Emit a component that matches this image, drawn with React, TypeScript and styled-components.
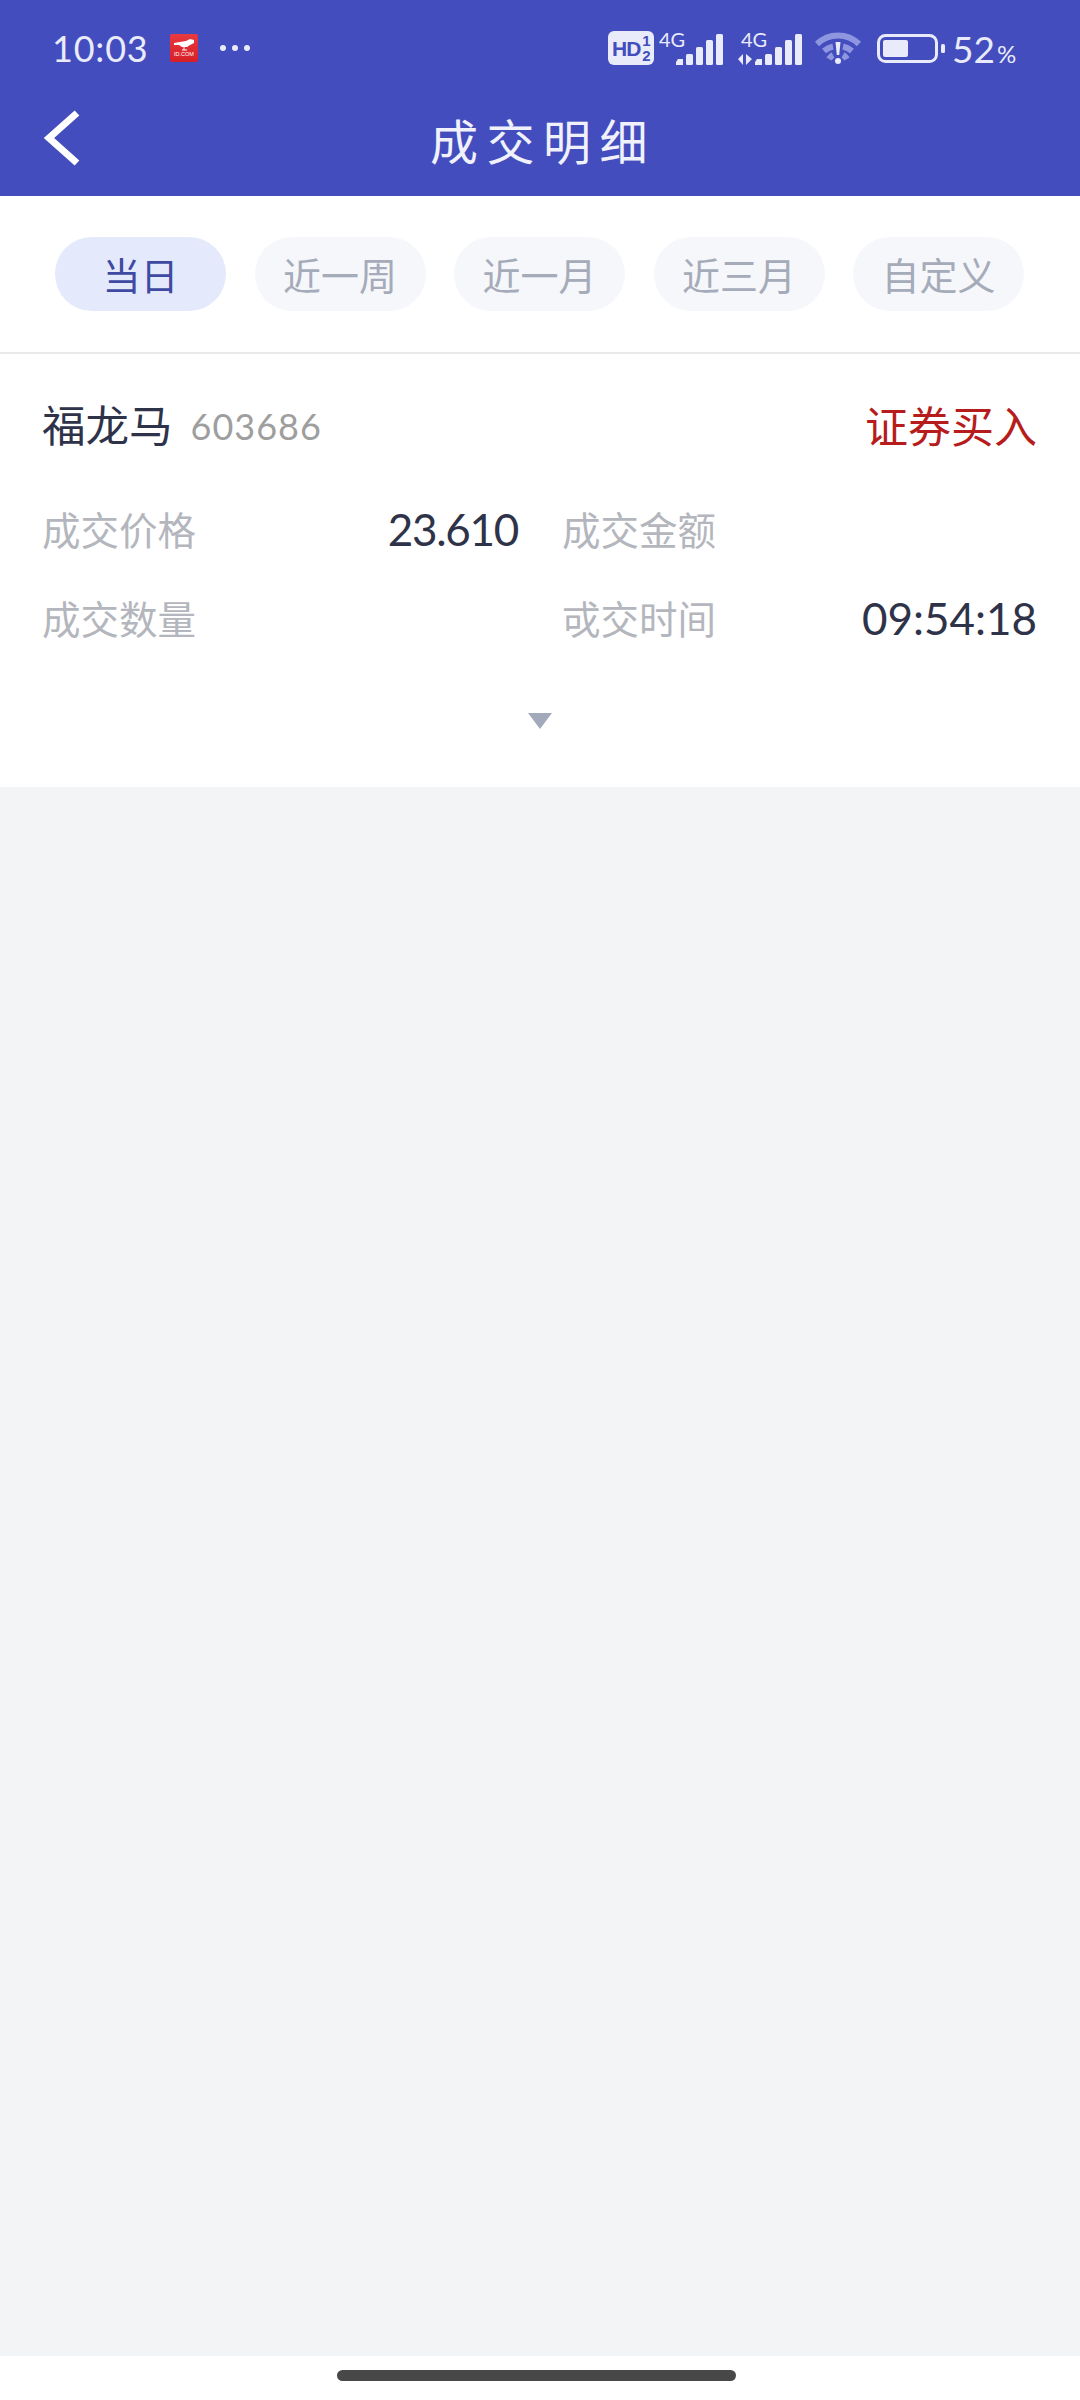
import React from "react";
import styled, { createGlobalStyle } from "styled-components";

const Global = createGlobalStyle`
  html, body { margin: 0; padding: 0; background: #f3f4f6; }
  * { box-sizing: border-box; }
`;

const CJK = `"Noto Sans CJK SC", "Noto Sans", sans-serif`;
const NUM = `Lato, "Noto Sans", sans-serif`;

const Page = styled.div`
  width: 1080px;
  height: 2400px;
  display: flex;
  flex-direction: column;
  background: #f3f4f6;
  font-family: ${CJK};
`;
const Header = styled.header`
  height: 196px;
  background: #434dbd;
  display: flex;
  flex-direction: column;
`;
const StatusBar = styled.div`
  height: 96px;
  padding: 0 22px 0 52px;
  display: flex;
  align-items: center;
  color: #e9ebfb;
`;
const Time = styled.span`
  font: 400 36px/1 ${NUM};
  letter-spacing: 0.8px;
  width: 118px;
`;
const Dots = styled.div`
  display: flex;
  gap: 6px;
  margin-left: 22px;
`;
const Dot = styled.i`
  width: 6px;
  height: 6px;
  border-radius: 50%;
  background: #e9ebfb;
`;
const StatusRight = styled.div`
  margin-left: auto;
  display: flex;
  align-items: center;
  width: 450px;
`;
const HdBadge = styled.div`
  width: 46px;
  height: 34px;
  border-radius: 6px;
  background: #e9ebfb;
  color: #434dbd;
  display: flex;
  align-items: center;
  padding-left: 4px;
  font: 700 21px/1 "Liberation Sans", sans-serif;
  letter-spacing: -1px;
`;
const Frac = styled.span`
  display: flex;
  flex-direction: column;
  font: 700 15px/15px "Liberation Sans", sans-serif;
  margin-left: 2px;
`;
const Net = styled.div<{ $gap: number }>`
  position: relative;
  height: 33px;
  width: 64px;
  margin-left: ${(p) => p.$gap}px;
`;
const NetLabel = styled.span<{ $inset?: number }>`
  position: absolute;
  left: ${(p) => p.$inset ?? 0}px;
  top: -3px;
  font: 400 20px/1 ${NUM};
  color: #e9ebfb;
`;
const Percent = styled.span`
  font: 400 37px/1 ${NUM};
  margin-left: 6px;
  color: #e9ebfb;
`;
const PercentSign = styled.span`
  font-size: 24px;
  margin-left: 2px;
`;
const Nav = styled.nav`
  position: relative;
  flex: 1;
  display: flex;
  align-items: center;
  justify-content: center;
  padding: 0 0 15px 6px;
`;
const BackIcon = styled.svg`
  position: absolute;
  left: 42px;
  top: 13px;
`;
const Title = styled.h1`
  margin: 0;
  font: 400 48px/1 ${CJK};
  letter-spacing: 8.5px;
  color: #f0f1fb;
`;
const Tabs = styled.div`
  height: 158px;
  padding: 41px 0 0 55px;
  display: flex;
  gap: 28.5px;
  background: #fff;
  border-bottom: 2px solid #e8e9eb;
  align-items: flex-start;
`;
const Tab = styled.div<{ $active?: boolean }>`
  width: 171px;
  height: 74px;
  border-radius: 37px;
  display: flex;
  align-items: center;
  justify-content: center;
  font: 400 38px/1 ${CJK};
  background: ${(p) => (p.$active ? "#e4e9fb" : "#f6f7fb")};
  color: ${(p) => (p.$active ? "#3f4aa3" : "#a5abb9")};
`;
const Card = styled.section`
  height: 433px;
  background: #fff;
  padding: 38px 43px 0 42px;
  display: flex;
  flex-direction: column;
`;
const TitleRow = styled.div`
  display: flex;
  align-items: center;
  height: 64px;
`;
const Name = styled.span`
  font: 400 43.5px/1 ${CJK};
  color: #2f3349;
`;
const Code = styled.span`
  font: 400 36px/1 ${NUM};
  color: #9e9e9e;
  margin-left: 18px;
  letter-spacing: 1px;
  position: relative;
  top: 2px;
`;
const Side = styled.span`
  margin-left: auto;
  font: 400 43px/1 ${CJK};
  color: #b71c1c;
`;
const Grid = styled.div`
  display: grid;
  grid-template-columns: 476px 475px;
  column-gap: 44px;
  margin-top: 28px;
`;
const Cell = styled.div`
  display: flex;
  align-items: center;
  justify-content: space-between;
  height: 89px;
`;
const Label = styled.span`
  font: 400 38.5px/1 ${CJK};
  color: #b4b6bd;
`;
const Value = styled.span<{ $tight?: boolean }>`
  font: 400 44px/1 ${NUM};
  letter-spacing: ${(p) => (p.$tight ? "-1.3px" : "0")};
  color: #2f3349;
`;
const Expand = styled.div`
  display: flex;
  justify-content: center;
  margin-top: 51px;
`;
const Main = styled.main`
  flex: 1;
`;
const HomeArea = styled.div`
  height: 44px;
  background: #fff;
  display: flex;
  justify-content: center;
  padding: 14px 7px 0 0;
`;
const HomeBar = styled.div`
  width: 399px;
  height: 11px;
  border-radius: 6px;
  background: #484848;
`;

const Logo = () => (
  <svg width="28" height="28" viewBox="0 0 28 28">
    <defs>
      <linearGradient id="lg" x1="0" y1="0" x2="0" y2="1">
        <stop offset="0" stopColor="#e83a3f" />
        <stop offset="1" stopColor="#d51f26" />
      </linearGradient>
    </defs>
    <rect width="28" height="28" rx="2" fill="url(#lg)" />
    <path d="M4 9l6-1 6-1 4-2 4 1v3l-4 2-3 2h-5l-3-2H4z" fill="#fff" />
    <path d="M14 13v3M12 16h5" stroke="#fff" strokeWidth="1" />
    <text x="14" y="22" fontSize="5.500" fill="#fff" textAnchor="middle" fontFamily="Liberation Sans">ID.COM</text>
  </svg>
);

const Bars = () => (
  <g fill="#e9ebfb" transform="translate(17 0)">
    <path d="M0 33v-3l2-3h5v6z" />
    <rect x="10" y="22" width="7" height="11" rx="1.500" />
    <rect x="20" y="15" width="7" height="18" rx="1.500" />
    <rect x="30" y="8" width="7" height="25" rx="1.500" />
    <rect x="40" y="2" width="7" height="31" rx="1.500" />
  </g>
);

const Wifi = () => (
  <svg width="48" height="34" viewBox="0 0 48 34" style={{ marginLeft: 12 }}>
    <g fill="none" stroke="#8f96e0" strokeWidth="6">
      <path d="M3 13 A30 30 0 0 1 45 13" />
      <path d="M10 20 A20 20 0 0 1 19 15.500" />
      <path d="M38 20 A20 20 0 0 0 29 15.500" />
      <path d="M15 28 A10 10 0 0 1 19 24" />
      <path d="M33 28 A10 10 0 0 0 29 24" />
    </g>
    <path d="M21.500 11h5l-1.300 13h-2.400z" fill="#e9ebfb" />
    <circle cx="24" cy="30" r="3" fill="#e9ebfb" />
  </svg>
);

const Battery = () => (
  <svg width="69" height="29" viewBox="0 0 69 29" style={{ marginLeft: 15 }}>
    <rect x="1.500" y="1.500" width="58" height="26" rx="7" fill="none" stroke="#e9ebfb" strokeWidth="3" />
    <rect x="6" y="6" width="25" height="17" rx="2" fill="#e9ebfb" />
    <rect x="64" y="10" width="4" height="9" rx="1.500" fill="#e9ebfb" />
  </svg>
);

export default function App() {
  return (
    <Page>
      <Global />
      <Header>
        <StatusBar>
          <Time>10:03</Time>
          <Logo />
          <Dots>
            <Dot />
            <Dot />
            <Dot />
          </Dots>
          <StatusRight>
            <HdBadge>
              HD
              <Frac>
                <span>1</span>
                <span>2</span>
              </Frac>
            </HdBadge>
            <Net $gap={5}>
              <NetLabel>4G</NetLabel>
              <svg width="64" height="33" viewBox="0 0 64 33">
                <Bars />
              </svg>
            </Net>
            <Net $gap={15}>
              <NetLabel $inset={3}>4G</NetLabel>
              <svg width="64" height="33" viewBox="0 0 64 33">
                <Bars />
                <path d="M0 27l5-5v11zM8 33V22l6 5z" fill="#e9ebfb" />
              </svg>
            </Net>
            <Wifi />
            <Battery />
            <Percent>
              52<PercentSign>%</PercentSign>
            </Percent>
          </StatusRight>
        </StatusBar>
        <Nav>
          <BackIcon width="40" height="60" viewBox="0 0 40 60">
            <path d="M35 4L7 29l28 25" fill="none" stroke="#fff" strokeWidth="7" />
          </BackIcon>
          <Title>成交明细</Title>
        </Nav>
      </Header>
      <Tabs>
        <Tab $active>当日</Tab>
        <Tab>近一周</Tab>
        <Tab>近一月</Tab>
        <Tab>近三月</Tab>
        <Tab>自定义</Tab>
      </Tabs>
      <Card>
        <TitleRow>
          <Name>福龙马</Name>
          <Code>603686</Code>
          <Side>证券买入</Side>
        </TitleRow>
        <Grid>
          <Cell>
            <Label>成交价格</Label>
            <Value $tight>23.610</Value>
          </Cell>
          <Cell>
            <Label>成交金额</Label>
          </Cell>
          <Cell>
            <Label>成交数量</Label>
          </Cell>
          <Cell>
            <Label>戓交时间</Label>
            <Value>09:54:18</Value>
          </Cell>
        </Grid>
        <Expand>
          <svg width="26" height="16" viewBox="0 0 26 16">
            <path d="M1 0h24l-12 16z" fill="#a1a9bb" />
          </svg>
        </Expand>
      </Card>
      <Main />
      <HomeArea>
        <HomeBar />
      </HomeArea>
    </Page>
  );
}
